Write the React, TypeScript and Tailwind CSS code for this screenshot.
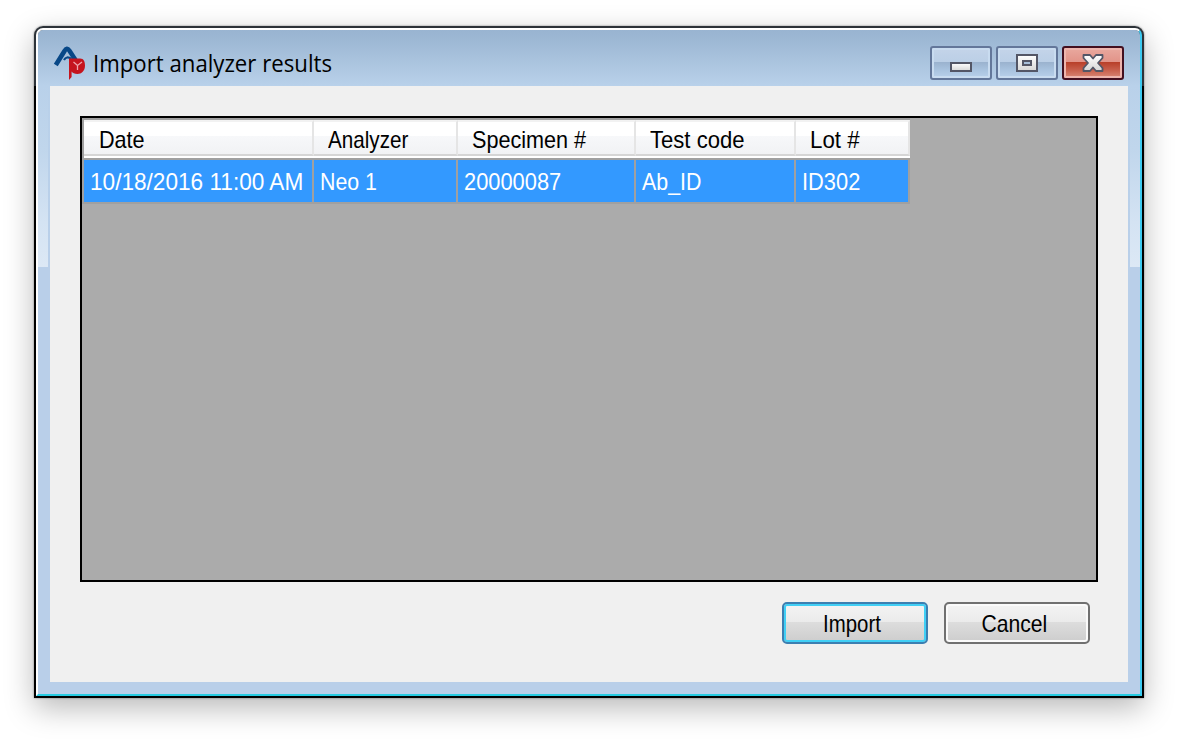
import React from "react";

type Column = { label: string; value: string; width: string; labelScale: string; valueScale: string };

const columns: Column[] = [
  { label: "Date", value: "10/18/2016 11:00 AM", width: "w-[230px]", labelScale: "ml-px scale-x-[0.9]", valueScale: "scale-x-[0.942]" },
  { label: "Analyzer", value: "Neo 1", width: "w-[144px]", labelScale: "scale-x-[0.86]", valueScale: "scale-x-[0.89]" },
  { label: "Specimen #", value: "20000087", width: "w-[178px]", labelScale: "scale-x-[0.90]", valueScale: "scale-x-[0.91]" },
  { label: "Test code", value: "Ab_ID", width: "w-[160px]", labelScale: "scale-x-[0.92]", valueScale: "scale-x-[0.89]" },
  { label: "Lot #", value: "ID302", width: "w-[114px]", labelScale: "scale-x-[0.93]", valueScale: "scale-x-[0.91]" },
];

function AppLogo() {
  return (
    <svg width="34" height="34" viewBox="0 0 34 34" className="shrink-0">
      <path d="M2.8 19 L11.5 5 Q13.8 0.8 16.3 4.5 L22.5 14" fill="none" stroke="#084887" strokeWidth="4.6" />
      <path d="M11 14 Q13.5 9.5 18.5 13" fill="none" stroke="#084887" strokeWidth="2.2" />
      <path d="M16 12.5 H27 C31 12.5 32 16 32 19.5 C32 25 28.5 28 24.5 28 C21.5 28 19.5 27 18.6 25.5 V31 L16 34 Z" fill="#c5141e" />
      <path d="M20.5 16 L24.5 19.5 L29 16 M24.5 19.5 V24" fill="none" stroke="#eea5ad" strokeWidth="1.3" />
    </svg>
  );
}

function CaptionButton({ kind }: { kind: "minimize" | "maximize" | "close" }) {
  const close = kind === "close";
  return (
    <button
      aria-label={kind}
      className={
        "flex h-[34px] w-[62px] items-center justify-center rounded-[3px] border-2 " +
        (close
          ? "border-[#431020] bg-[linear-gradient(#e9a99f_0px,#e29388_14px,#b83e28_14px,#c85f4c_22px,#d98978_30px)] shadow-[inset_0_0_0_2px_#edb5ae]"
          : "border-[#63779a] bg-[linear-gradient(#c4d4e9_0px,#bbcfe6_14px,#9ab2ce_14px,#a9c3df_22px,#b9d1eb_30px)] shadow-[inset_0_0_0_2px_#c9dcf0]")
      }
    >
      <svg width="24" height="22" viewBox="0 0 24 22">
        <defs>
          <linearGradient id={"glyph-" + kind} x1="0" y1="0" x2="0" y2="1">
            <stop offset="0" stopColor="#ffffff" />
            <stop offset="1" stopColor="#d6d6d6" />
          </linearGradient>
        </defs>
        {kind === "minimize" && (
          <rect x="2" y="11" width="20" height="8" fill="url(#glyph-minimize)" stroke="#535666" strokeWidth="2" />
        )}
        {kind === "maximize" && (
          <>
            <rect x="2" y="3" width="20" height="16" fill="url(#glyph-maximize)" stroke="#535666" strokeWidth="2" />
            <rect x="8" y="9" width="8" height="4" fill="#a7bfda" stroke="#535666" strokeWidth="2" />
          </>
        )}
        {kind === "close" && (
          <path
            d="M2.5 3 H9 L12 6.5 L15 3 H21.5 V6 L17 11 L21.5 16 V19 H15 L12 15.5 L9 19 H2.5 V16 L7 11 L2.5 6 Z"
            fill="url(#glyph-close)"
            stroke="#535666"
            strokeWidth="1.8"
            strokeLinejoin="round"
          />
        )}
      </svg>
    </button>
  );
}

function SideSheen() {
  return <div className="mx-auto h-[181px] w-[10px] bg-[linear-gradient(#b9d1ea_0%,#c0d6ec_35%,#d4e3f3_75%,#dce8f5_100%)]" />;
}

export default function App() {
  return (
    <div className="h-[740px] w-[1178px] overflow-hidden bg-white pt-[26px] pl-[34px] font-['Liberation_Sans',sans-serif] text-[24px] text-black">
      <div className="h-[672px] w-[1110px] rounded-t-[9px] bg-[linear-gradient(#2d3339_60px,#000_60px)] p-[2px] shadow-[0_10px_30px_rgba(0,0,0,0.28),0_0_2px_rgba(0,0,0,0.5)]">
        <div className="flex h-full flex-col rounded-t-[7px] border-2 border-t-white border-r-[#3dcaf1] border-b-[#26cbe2] border-l-white bg-[linear-gradient(#99b4d1_0px,#9db8d4_10px,#b9d1ea_56px,#b9cfe9_236px,#b9cfe9_100%)] bg-clip-padding">
          <header className="flex h-[56px] shrink-0 items-start pt-[16px] pr-[16px] pl-[15px]">
            <AppLogo />
            <h1 className="ml-[6px] h-[34px] w-[300px] origin-left scale-x-[0.925] font-['Open_Sans',sans-serif] text-[24px] leading-[34px] whitespace-nowrap">
              Import analyzer results
            </h1>
            <div className="ml-auto flex gap-[4px]">
              <CaptionButton kind="minimize" />
              <CaptionButton kind="maximize" />
              <CaptionButton kind="close" />
            </div>
          </header>
          <div className="flex h-[596px] shrink-0">
            <div className="w-[12px] pr-[2px]">
              <SideSheen />
            </div>
            <main className="h-full w-[1078px] bg-[#f0f0f0] pt-[30px] pl-[30px]">
              <section className="h-[466px] w-[1018px] border-2 border-black bg-[#ababab]">
                <div className="w-[828px] border-t-2 border-l-2 border-[#a0a0a0]">
                  <div className="flex h-[38px] bg-white">
                    {columns.map((c) => (
                      <div key={c.label} className={"h-[36px] border-t-2 border-r-2 border-b-2 border-t-[#f2f2f2] border-r-[#e5e5e5] border-b-[#d5d5d5] bg-[linear-gradient(#fff_14px,#f7f8fa_14px,#f1f2f4_32px)] pl-[14px] " + c.width}>
                        <span className={"inline-block origin-left leading-[36px] whitespace-nowrap " + c.labelScale}>{c.label}</span>
                      </div>
                    ))}
                  </div>
                  <div className="flex h-[46px] border-y-2 border-[#a0a0a0] bg-[#3399ff] text-white">
                    {columns.map((c) => (
                      <div key={c.label} className={"h-[42px] border-r-2 border-[#a0a0a0] pl-[6px] " + c.width}>
                        <span className={"inline-block origin-left leading-[43px] whitespace-nowrap " + c.valueScale}>{c.value}</span>
                      </div>
                    ))}
                  </div>
                </div>
              </section>
              <footer className="mt-[20px] flex justify-end gap-[16px] pr-[38px]">
                <button className="h-[42px] w-[146px] rounded-[5px] border-2 border-[#3c7fb1] bg-[linear-gradient(#f3f3f3_0px,#ebebeb_18px,#dddddd_18px,#cdcdcd_38px)] pr-[6px] leading-[40px] shadow-[inset_0_0_0_2px_#40cff5]">
                  <span className="inline-block scale-x-[0.85]">Import</span>
                </button>
                <button className="h-[42px] w-[146px] rounded-[5px] border-2 border-[#707070] bg-[linear-gradient(#f3f3f3_0px,#ebebeb_18px,#dddddd_18px,#cdcdcd_38px)] pr-[6px] leading-[40px] shadow-[inset_0_0_0_2px_#fafafa]">
                  <span className="inline-block scale-x-[0.88]">Cancel</span>
                </button>
              </footer>
            </main>
            <div className="w-[12px] pl-[2px]">
              <SideSheen />
            </div>
          </div>
        </div>
      </div>
    </div>
  );
}
